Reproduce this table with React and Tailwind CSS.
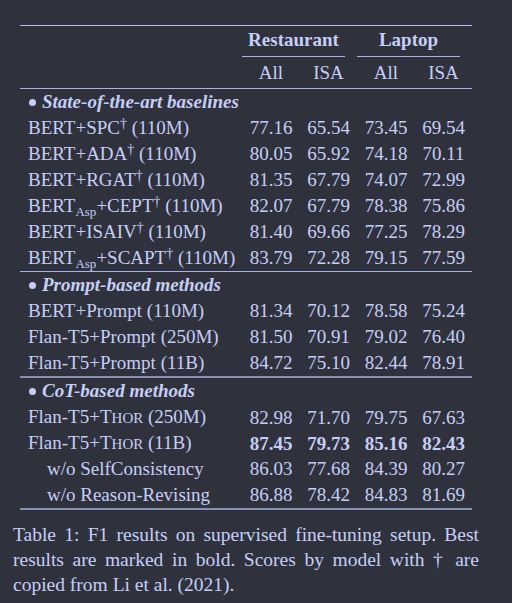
import React from 'react';

const Dag = () => <sup className="text-[14px] relative -top-[6px] align-baseline">†</sup>;
const Asp = () => <sub className="text-[13px] relative top-[4px] align-baseline">Asp</sub>;
const Thor = () => (
  <span>
    T<span className="text-[15px]">HOR</span>
  </span>
);

const sections = [
  {
    title: 'State-of-the-art baselines',
    rule: 'border-t border-[#a9b4e6]',
    rows: [
      { name: <>BERT+SPC<Dag /> (110M)</>, v: ['77.16', '65.54', '73.45', '69.54'] },
      { name: <>BERT+ADA<Dag /> (110M)</>, v: ['80.05', '65.92', '74.18', '70.11'] },
      { name: <>BERT+RGAT<Dag /> (110M)</>, v: ['81.35', '67.79', '74.07', '72.99'] },
      { name: <>BERT<Asp />+CEPT<Dag /> (110M)</>, v: ['82.07', '67.79', '78.38', '75.86'] },
      { name: <>BERT+ISAIV<Dag /> (110M)</>, v: ['81.40', '69.66', '77.25', '78.29'] },
      { name: <>BERT<Asp />+SCAPT<Dag /> (110M)</>, v: ['83.79', '72.28', '79.15', '77.59'] },
    ],
  },
  {
    title: 'Prompt-based methods',
    rule: 'border-t border-[#a9b4e6]',
    rows: [
      { name: 'BERT+Prompt (110M)', v: ['81.34', '70.12', '78.58', '75.24'] },
      { name: 'Flan-T5+Prompt (250M)', v: ['81.50', '70.91', '79.02', '76.40'] },
      { name: 'Flan-T5+Prompt (11B)', v: ['84.72', '75.10', '82.44', '78.91'] },
    ],
  },
  {
    title: 'CoT-based methods',
    rule: 'border-t-2 border-[#8890b4]',
    rows: [
      { name: <>Flan-T5+<Thor /> (250M)</>, v: ['82.98', '71.70', '79.75', '67.63'] },
      { name: <>Flan-T5+<Thor /> (11B)</>, v: ['87.45', '79.73', '85.16', '82.43'], bold: true },
      { name: 'w/o SelfConsistency', v: ['86.03', '77.68', '84.39', '80.27'], indent: true },
      { name: 'w/o Reason-Revising', v: ['86.88', '78.42', '84.83', '81.69'], indent: true },
    ],
  },
];

const Row = ({ row }) => (
  <div className="grid grid-cols-[222px_58px_57px_58px_57px] h-[26px] items-center whitespace-nowrap">
    <div className={row.indent ? 'pl-[27px]' : 'pl-[8px]'}>{row.name}</div>
    {row.v.map((x, i) => (
      <div key={i} className={`text-center ${row.bold ? 'font-bold' : ''}`}>
        {x}
      </div>
    ))}
  </div>
);

export default function App() {
  return (
    <div className="w-[512px] h-[603px] bg-[#2f323d] text-[#c6cef6] text-[19px] leading-[26px] overflow-hidden font-['Liberation_Serif']">
      <div className="ml-[20px] mt-[25px] w-[452px] border-t border-[#b3bdf0]">
        <div className="grid grid-cols-[222px_115px_115px] h-[31px] items-center font-bold">
          <div />
          <div className="text-center h-full flex flex-col justify-end">
            <span className="mr-[12px]">Restaurant</span>
            <div className="mr-[12px] mt-[3px] border-t border-[#aab4e8]" />
          </div>
          <div className="text-center h-full flex flex-col justify-end">
            <span className="mr-[12px]">Laptop</span>
            <div className="mr-[12px] mt-[3px] border-t border-[#aab4e8]" />
          </div>
        </div>
        <div className="grid grid-cols-[222px_58px_57px_58px_57px] h-[31px] items-center">
          <div />
          <div className="text-center">All</div>
          <div className="text-center">ISA</div>
          <div className="text-center">All</div>
          <div className="text-center">ISA</div>
        </div>
        {sections.map((s, si) => (
          <div key={si} className={s.rule}>
            <div className="h-[26px] flex items-center pl-[9px] gap-[6px]">
              <span className="w-[7px] h-[7px] rounded-full bg-[#c6cef6]" />
              <span className="italic font-bold">{s.title}</span>
            </div>
            {s.rows.map((r, i) => (
              <Row key={i} row={r} />
            ))}
          </div>
        ))}
        <div className="border-t-2 border-[#8890b4]" />
      </div>
      <p className="ml-[13px] mt-[12px] w-[466px] text-justify text-[19.5px] leading-[25px]">
        Table 1: F1 results on supervised fine-tuning setup. Best results are marked in bold. Scores by model with † are
        copied from Li et al. (2021).
      </p>
    </div>
  );
}
